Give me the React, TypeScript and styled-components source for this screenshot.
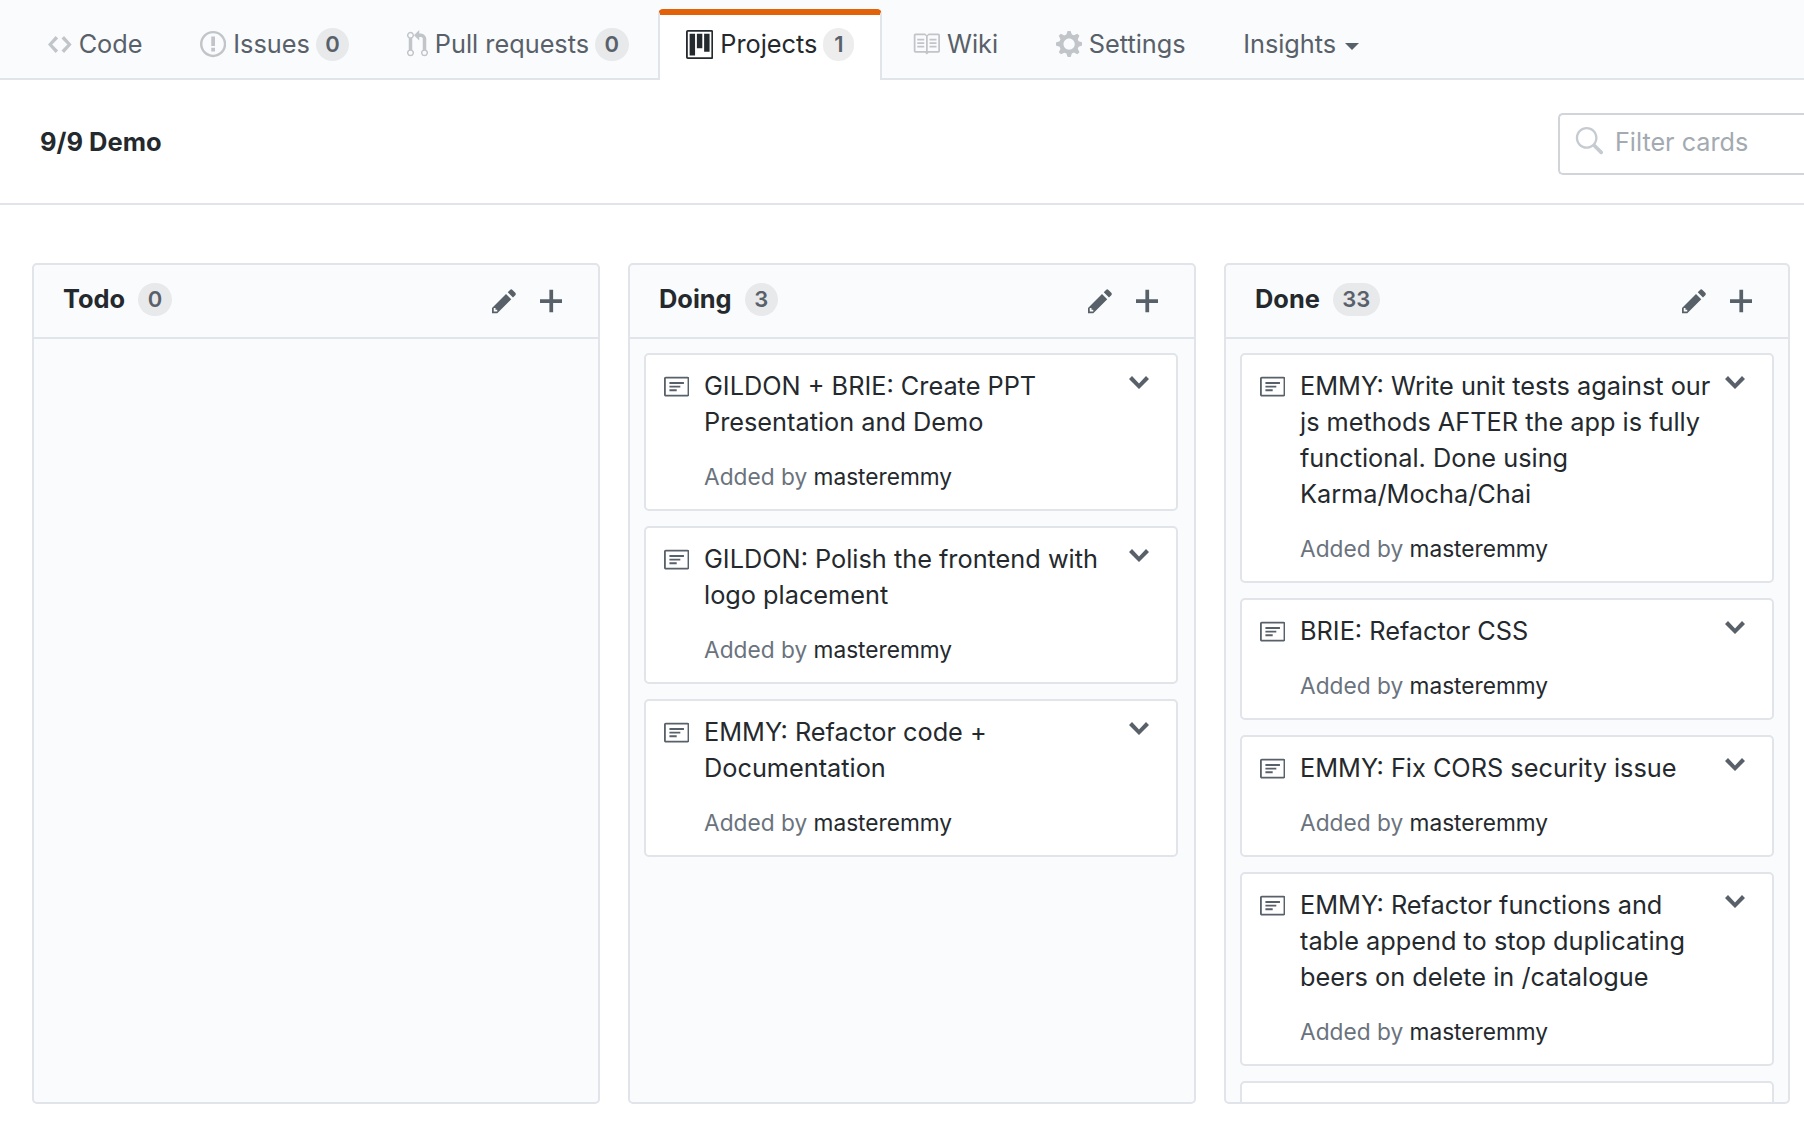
import React from "react";
import styled, { createGlobalStyle } from "styled-components";

const Global = createGlobalStyle`
  html, body { margin: 0; padding: 0; background: #fff; overflow: hidden; }
  body { font-family: Inter, "Liberation Sans", sans-serif; color: #24292e; }
  * { box-sizing: border-box; }
`;

const ICONS: Record<string, { w: number; d: string }> = {
  code: { w: 14, d: "M9.5 3L8 4.5 11.5 8 8 11.5 9.5 13 14 8 9.5 3zm-5 0L0 8l4.5 5L6 11.5 2.5 8 6 4.5 4.5 3z" },
  issue: { w: 14, d: "M7 2.3c3.14 0 5.7 2.56 5.7 5.7s-2.56 5.7-5.7 5.7A5.71 5.71 0 0 1 1.3 8c0-3.14 2.56-5.7 5.7-5.7zM7 1C3.14 1 0 4.14 0 8s3.14 7 7 7 7-3.14 7-7-3.14-7-7-7zm1 3H6v5h2V4zm0 6H6v2h2v-2z" },
  pull: { w: 12, d: "M11 11.28V5c-.03-.78-.34-1.47-.94-2.06C9.46 2.35 8.78 2.03 8 2H7V0L4 3l3 3V4h1c.27.02.48.11.69.31.21.2.3.42.31.69v6.28A1.993 1.993 0 0 0 10 15a1.993 1.993 0 0 0 1-3.72zm-1 2.92c-.66 0-1.2-.55-1.2-1.2 0-.65.55-1.2 1.2-1.2.65 0 1.2.55 1.2 1.2 0 .65-.55 1.2-1.2 1.2zM4 3c0-1.11-.89-2-2-2a1.993 1.993 0 0 0-1 3.72v6.56A1.993 1.993 0 0 0 2 15a1.993 1.993 0 0 0 1-3.72V4.72c.59-.34 1-.98 1-1.72zm-.8 10c0 .66-.55 1.2-1.2 1.2-.65 0-1.2-.55-1.2-1.2 0-.65.55-1.2 1.2-1.2.65 0 1.2.55 1.2 1.2zM2 4.2C1.34 4.2.8 3.65.8 3c0-.65.55-1.2 1.2-1.2.65 0 1.2.55 1.2 1.2 0 .65-.55 1.2-1.2 1.2z" },
  project: { w: 15, d: "M10 12h3V2h-3v10zm-4-2h3V2H6v8zm-4 4h3V2H2v12zm-1 1h13V1H1v14zM14 0H1a1 1 0 0 0-1 1v14a1 1 0 0 0 1 1h13a1 1 0 0 0 1-1V1a1 1 0 0 0-1-1z" },
  book: { w: 16, d: "M3 5h4v1H3V5zm0 3h4V7H3v1zm0 2h4V9H3v1zm11-5h-4v1h4V5zm0 2h-4v1h4V7zm0 2h-4v1h4V9zm2-6v9c0 .55-.45 1-1 1H9.5l-1 1-1-1H2c-.55 0-1-.45-1-1V3c0-.55.45-1 1-1h5.5l1 1 1-1H15c.55 0 1 .45 1 1zm-8 .5L7.5 3H2v9h6V3.5zm7-.5H9.5l-.5.5V12h6V3z" },
  gear: { w: 14, d: "M14 8.77v-1.6l-1.94-.64-.45-1.09.88-1.84-1.13-1.13-1.81.91-1.09-.45-.69-1.92h-1.6l-.63 1.94-1.11.45-1.84-.88-1.13 1.13.91 1.81-.45 1.09L0 7.23v1.59l1.94.64.45 1.09-.88 1.84 1.13 1.13 1.81-.91 1.09.45.69 1.92h1.59l.63-1.94 1.11-.45 1.84.88 1.13-1.13-.92-1.81.47-1.09L14 8.75v.02zM7 11c-1.66 0-3-1.34-3-3s1.34-3 3-3 3 1.34 3 3-1.34 3-3 3z" },
  pencil: { w: 14, d: "M0 12v3h3l8-8-3-3-8 8zm3 2H1v-2h1v1h1v1zm10.3-9.3L12 6 9 3l1.3-1.3a.996.996 0 0 1 1.41 0l1.59 1.59c.39.39.39 1.02 0 1.41z" },
  plus: { w: 12, d: "M12 9H7v5H5V9H0V7h5V2h2v5h5v2z" },
  chevron: { w: 10, d: "M5 11L0 6l1.5-1.5L5 8.25 8.5 4.5 10 6l-5 5z" },
  note: { w: 14, d: "M3 10h4V9H3v1zm0-2h6V7H3v1zm0-2h8V5H3v1zm10 6H1V3h12v9zM1 2c-.55 0-1 .45-1 1v9c0 .55.45 1 1 1h12c.55 0 1-.45 1-1V3c0-.55-.45-1-1-1H1z" },
  search: { w: 16, d: "M15.7 13.3l-3.81-3.83A5.93 5.93 0 0 0 13 6c0-3.31-2.69-6-6-6S1 2.69 1 6s2.69 6 6 6c1.3 0 2.48-.41 3.47-1.11l3.83 3.81c.19.2.45.3.7.3.25 0 .52-.09.7-.3a.996.996 0 0 0 0-1.41v.01zM7 10.7c-2.59 0-4.7-2.11-4.7-4.7 0-2.59 2.11-4.7 4.7-4.7 2.59 0 4.7 2.11 4.7 4.7 0 2.59-2.11 4.7-4.7 4.7z" },
};

const Svg = styled.svg<{ $color: string }>`
  flex: none;
  display: block;
  fill: ${(p) => p.$color};
`;

function Icon({ name, h = 27, color = "#586069" }: { name: string; h?: number; color?: string }) {
  const i = ICONS[name];
  return (
    <Svg $color={color} viewBox={`0 0 ${i.w} 16`} width={(i.w * h) / 16} height={h}>
      <path fillRule="evenodd" d={i.d} />
    </Svg>
  );
}

const Page = styled.div`
  width: 1804px;
  height: 1124px;
  overflow: hidden;
  background: #fff;
`;

const TabBar = styled.nav`
  height: 80px;
  display: flex;
  align-items: flex-end;
  gap: 1.5px;
  padding-left: 20px;
  background: #fafbfc;
  border-bottom: 2px solid #e1e4e8;
`;

const Tab = styled.div<{ $active?: boolean }>`
  height: ${(p) => (p.$active ? "71px" : "70px")};
  margin-bottom: ${(p) => (p.$active ? "-2px" : "0")};
  display: flex;
  align-items: center;
  gap: 7px;
  padding: ${(p) => (p.$active ? "0 26px 7px" : "2px 26px 0")};
  font-size: 25.3px;
  line-height: 36px;
  color: ${(p) => (p.$active ? "#24292e" : "#586069")};
  background: ${(p) => (p.$active ? "#fff" : "transparent")};
  border: 2px solid ${(p) => (p.$active ? "#e1e4e8" : "transparent")};
  border-width: ${(p) => (p.$active ? "6px 2px 0" : "0 2px")};
  border-top-color: ${(p) => (p.$active ? "#e36209" : "transparent")};
  border-radius: ${(p) => (p.$active ? "5px 5px 0 0" : "0")};
`;

const Counter = styled.span`
  display: inline-block;
  height: 33px;
  min-width: 31px;
  margin-left: -1px;
  padding: 0 9.5px;
  border-radius: 17px;
  background: rgba(27, 31, 35, 0.08);
  color: #586069;
  font-size: 22px;
  font-weight: 600;
  line-height: 33px;
  text-align: center;
`;

const Caret = styled.span`
  width: 0;
  height: 0;
  margin-top: 4px;
  margin-left: 2px;
  border-style: solid;
  border-width: 7px 7px 0;
  border-color: #586069 transparent transparent;
`;

const ProjectHead = styled.header`
  height: 125px;
  display: flex;
  align-items: center;
  justify-content: space-between;
  padding-left: 40px;
  border-bottom: 2px solid #e1e4e8;
`;

const ProjectTitle = styled.h1`
  margin: 0;
  font-size: 25.5px;
  font-weight: 700;
  line-height: 36px;
  color: #24292e;
`;

const Filter = styled.div`
  flex: none;
  width: 246px;
  height: 62px;
  display: flex;
  align-items: center;
  gap: 12px;
  margin-top: 4px;
  padding: 0 0 4px 14px;
  border: 2px solid #d1d5da;
  border-right: none;
  border-radius: 5px 0 0 5px;
  color: #a3aab1;
  font-size: 25.2px;
`;

const Board = styled.main`
  height: 919px;
  display: grid;
  grid-template-columns: 568px 568px 566px;
  column-gap: 28px;
  align-items: start;
  padding: 58px 0 0 32px;
`;

const Column = styled.section`
  height: 841px;
  overflow: hidden;
  background: #fafbfc;
  border: 2px solid #e1e4e8;
  border-radius: 5px;
`;

const ColumnHead = styled.div`
  height: 74px;
  display: flex;
  align-items: center;
  padding: 0 36px 0 29px;
  border-bottom: 2px solid #e1e4e8;
`;

const ColumnName = styled.h2`
  margin: 0 13px 4px 0;
  font-size: 25.4px;
  font-weight: 700;
  line-height: 36px;
`;

const ColumnCounter = styled(Counter)`
  margin: 0 0 4px;
  padding: 0 9.5px;
`;

const HeadActions = styled.div`
  margin-left: auto;
  display: flex;
  align-items: center;
  gap: 23px;
`;

const Cards = styled.div`
  width: 562px;
  display: flex;
  flex-direction: column;
  gap: 15px;
  padding: 14px 14px 0;
`;

const Card = styled.article`
  flex: none;
  display: flex;
  align-items: flex-start;
  padding: 13px 27px 14px 18px;
  background: #fff;
  border: 2px solid #e1e4e8;
  border-radius: 5px;
`;

const NoteSlot = styled.div`
  flex: none;
  width: 40px;
  padding-top: 5px;
`;

const CardBody = styled.div`
  flex: 1;
  min-width: 0;
`;

const CardTitle = styled.div`
  font-size: 25.3px;
  line-height: 36px;
  color: #24292e;
  white-space: nowrap;
`;

const CardMeta = styled.div`
  margin-top: 19px;
  font-size: 22.7px;
  line-height: 36px;
  color: #6a737d;
`;

const Author = styled.span`
  color: #24292e;
`;

const ChevronSlot = styled.div`
  flex: none;
  width: 20px;
  margin-top: -1px;
`;

const BlankCard = styled.div`
  flex: none;
  height: 80px;
  background: #fff;
  border: 2px solid #e1e4e8;
  border-radius: 5px;
`;

type CardData = { lines: string[] };
const doing: CardData[] = [
  { lines: ["GILDON + BRIE: Create PPT", "Presentation and Demo"] },
  { lines: ["GILDON: Polish the frontend with", "logo placement"] },
  { lines: ["EMMY: Refactor code +", "Documentation"] },
];
const done: CardData[] = [
  { lines: ["EMMY: Write unit tests against our", "js methods AFTER the app is fully", "functional. Done using", "Karma/Mocha/Chai"] },
  { lines: ["BRIE: Refactor CSS"] },
  { lines: ["EMMY: Fix CORS security issue"] },
  { lines: ["EMMY: Refactor functions and", "table append to stop duplicating", "beers on delete in /catalogue"] },
];

function CardView({ lines }: CardData) {
  return (
    <Card>
      <NoteSlot>
        <Icon name="note" h={29} />
      </NoteSlot>
      <CardBody>
        <CardTitle>
          {lines.map((l, i) => (
            <div key={i}>{l}</div>
          ))}
        </CardTitle>
        <CardMeta>
          Added by <Author>masteremmy</Author>
        </CardMeta>
      </CardBody>
      <ChevronSlot>
        <Icon name="chevron" h={32} />
      </ChevronSlot>
    </Card>
  );
}

function BoardColumn({ name, count, cards, more }: { name: string; count: number; cards: CardData[]; more?: boolean }) {
  return (
    <Column>
      <ColumnHead>
        <ColumnName>{name}</ColumnName>
        <ColumnCounter>{count}</ColumnCounter>
        <HeadActions>
          <Icon name="pencil" h={28} />
          <Icon name="plus" h={30} />
        </HeadActions>
      </ColumnHead>
      {cards.length > 0 && (
        <Cards>
          {cards.map((c, i) => (
            <CardView key={i} lines={c.lines} />
          ))}
          {more && <BlankCard />}
        </Cards>
      )}
    </Column>
  );
}

export default function App() {
  const muted = "#c1c4c8";
  return (
    <Page>
      <Global />
      <TabBar>
        <Tab><Icon name="code" color={muted} />Code</Tab>
        <Tab><Icon name="issue" h={30} color={muted} />Issues<Counter>0</Counter></Tab>
        <Tab><Icon name="pull" h={28} color={muted} />Pull requests<Counter>0</Counter></Tab>
        <Tab $active><Icon name="project" h={29} color="#24292e" />Projects<Counter>1</Counter></Tab>
        <Tab><Icon name="book" h={28} color={muted} />Wiki</Tab>
        <Tab><Icon name="gear" h={30} color={muted} />Settings</Tab>
        <Tab>Insights<Caret /></Tab>
      </TabBar>
      <ProjectHead>
        <ProjectTitle>9/9 Demo</ProjectTitle>
        <Filter>
          <Icon name="search" h={29} color="#c6cbd1" />
          Filter cards
        </Filter>
      </ProjectHead>
      <Board>
        <BoardColumn name="Todo" count={0} cards={[]} />
        <BoardColumn name="Doing" count={3} cards={doing} />
        <BoardColumn name="Done" count={33} cards={done} more />
      </Board>
    </Page>
  );
}
